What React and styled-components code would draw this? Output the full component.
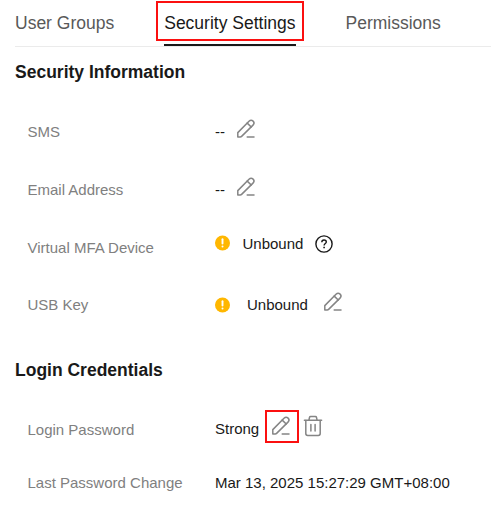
import React from 'react';
import styled, { createGlobalStyle } from 'styled-components';

const GlobalStyle = createGlobalStyle`
    * {
        box-sizing: border-box;
    }

    body {
        margin: 0;
        background: #fff;
        font-family: 'Liberation Sans', Arial, sans-serif;
    }
`;

const Page = styled.div`
    width: 491px;
    height: 508px;
    overflow: hidden;
    padding-left: 15px;
    color: #191919;
`;

const Tabs = styled.nav`
    display: flex;
    height: 47px;
    border-bottom: 1px solid #ebebeb;
`;

const Tab = styled.div`
    position: relative;
    height: 46px;
    margin-right: 50px;
    padding-top: 12px;
    line-height: 22px;
    font-size: 17.5px;
    white-space: nowrap;
    color: ${(props) => (props.$active ? '#191919' : '#595959')};
    border-bottom: 2px solid
        ${(props) => (props.$active ? '#191919' : 'transparent')};
`;

const Highlight = styled.span`
    position: absolute;
    inset: ${(props) => props.$inset};
    border: 2px solid #fb1010;
`;

const Heading = styled.h2`
    height: 22px;
    margin: ${(props) => props.$margin};
    line-height: 22px;
    font-size: 17.5px;
    font-weight: 700;
`;

const Row = styled.div`
    display: grid;
    grid-template-columns: 187.5px 1fr;
    align-items: center;
    height: ${(props) => props.$height || 58}px;
    padding-left: 12.5px;
    line-height: 20px;
    font-size: 15px;
`;

const Label = styled.span`
    color: #808080;
`;

const Value = styled.div`
    display: flex;
    align-items: center;
    height: 20px;
    margin-bottom: ${(props) => props.$lift || 0}px;
    white-space: nowrap;
`;

const Status = styled.span`
    margin-left: ${(props) => props.$gap}px;
`;

const IconButton = styled.span`
    position: relative;
    display: flex;
    margin: 0 0 ${(props) => props.$lift || 0}px ${(props) => props.$gap || 0}px;
`;

const EditIcon = () => (
    <svg
        width='20'
        height='20'
        viewBox='0 0 20 20'
        fill='none'
        stroke='#858585'
        strokeWidth='1.5'
        strokeLinecap='round'
        strokeLinejoin='round'
    >
        <path d='M1.8 18 V13.6 L13 2.3 C14.3 1 15.9 1 17.1 2.1 C18.3 3.3 18.2 4.9 17 6.1 L5.6 17.4 Q5 18 4.2 18 Z' />
        <path d='M11.2 4.1 L15.2 8 M11.2 18 H18' />
    </svg>
);

const TrashIcon = () => (
    <svg
        width='20'
        height='22'
        viewBox='0 0 20 22'
        fill='none'
        stroke='#858585'
        strokeWidth='1.5'
        strokeLinecap='round'
        strokeLinejoin='round'
    >
        <path d='M1.4 5.3 H18.6 M5.9 5.1 L6.5 2.5 Q6.7 1.6 7.6 1.6 H12.4 Q13.3 1.6 13.5 2.5 L14.1 5.1' />
        <path d='M2.8 5.5 V18.5 Q2.8 20.4 4.7 20.4 H15.3 Q17.2 20.4 17.2 18.5 V5.5 M7.9 9.4 V16 M12.1 9.4 V16' />
    </svg>
);

const WarningIcon = () => (
    <svg width='15' height='16' viewBox='0 0 15 16'>
        <circle cx='7.5' cy='8' r='7.5' fill='#ffb700' />
        <path d='M7.5 4.2 V8.6' stroke='#fff' strokeWidth='1.9' strokeLinecap='round' />
        <circle cx='7.5' cy='11.5' r='1' fill='#fff' />
    </svg>
);

const HelpIcon = () => (
    <svg
        width='18'
        height='18'
        viewBox='0 0 18 18'
        fill='none'
        stroke='#191919'
        strokeWidth='1.4'
    >
        <circle cx='9' cy='9' r='8.1' />
        <path d='M6.8 7.2 C6.8 5.7 7.7 5 9 5 C10.3 5 11.3 5.8 11.3 7 C11.3 8.5 9.1 8.6 9.1 10.5' />
        <path d='M9.1 11.8 V13.3' strokeWidth='1.6' />
    </svg>
);

const App = () => {
    return (
        <Page>
            <GlobalStyle />
            <Tabs>
                <Tab>User Groups</Tab>
                <Tab $active>
                    Security Settings
                    <Highlight $inset='1px -8px 3px -8px' />
                </Tab>
                <Tab>Permissions</Tab>
            </Tabs>

            <Heading $margin='14px 0 20px'>Security Information</Heading>
            <Row>
                <Label>SMS</Label>
                <Value>
                    --
                    <IconButton $gap={11} $lift={7}>
                        <EditIcon />
                    </IconButton>
                </Value>
            </Row>
            <Row>
                <Label>Email Address</Label>
                <Value>
                    --
                    <IconButton $gap={11} $lift={7}>
                        <EditIcon />
                    </IconButton>
                </Value>
            </Row>
            <Row>
                <Label>Virtual MFA Device</Label>
                <Value $lift={8}>
                    <IconButton $lift={3}>
                        <WarningIcon />
                    </IconButton>
                    <Status $gap={12.5}>Unbound</Status>
                    <IconButton $gap={11.5}>
                        <HelpIcon />
                    </IconButton>
                </Value>
            </Row>
            <Row $height={56}>
                <Label>USB Key</Label>
                <Value>
                    <IconButton $lift={1}>
                        <WarningIcon />
                    </IconButton>
                    <Status $gap={17}>Unbound</Status>
                    <IconButton $gap={15.5} $lift={7}>
                        <EditIcon />
                    </IconButton>
                </Value>
            </Row>

            <Heading $margin='26px 0 22px'>Login Credentials</Heading>
            <Row $height={53}>
                <Label>Login Password</Label>
                <Value $lift={2}>
                    Strong
                    <IconButton $gap={11.5} $lift={5}>
                        <EditIcon />
                        <Highlight $inset='-6px -8px -7px -6px' />
                    </IconButton>
                    <IconButton $gap={12.5} $lift={6}>
                        <TrashIcon />
                    </IconButton>
                </Value>
            </Row>
            <Row $height={53}>
                <Label>Last Password Change</Label>
                <Value>Mar 13, 2025 15:27:29 GMT+08:00</Value>
            </Row>
        </Page>
    );
};

export default App;
